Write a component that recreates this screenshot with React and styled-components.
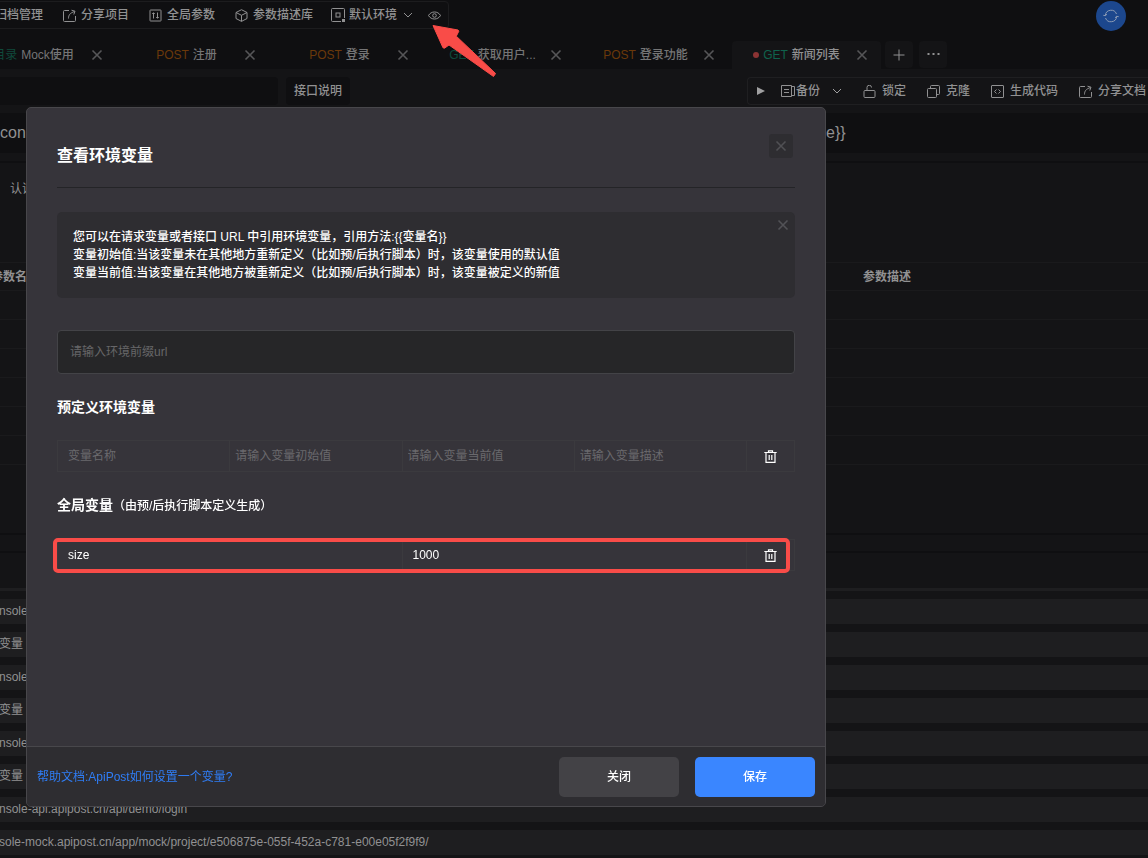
import React, { useState } from "react";
import styled, { createGlobalStyle, css } from "styled-components";

const tabList = [
	{ method: "目录", name: "Mock使用", color: "#0f4a3b" },
	{ method: "POST", name: "注册", color: "#6b390a" },
	{ method: "POST", name: "登录", color: "#6b390a" },
	{ method: "GET", name: "获取用户...", color: "#0f4a3b" },
	{ method: "POST", name: "登录功能", color: "#6b390a" },
	{ method: "GET", name: "新闻列表", color: "#0f634d", active: true },
];

const logList = [
	"nsole-api.apipost.cn/api/demo/login",
	"变量",
	"nsole-api.apipost.cn/api/demo/login",
	"变量",
	"nsole-api.apipost.cn/api/demo/login",
	"变量",
	"nsole-api.apipost.cn/api/demo/login",
	"sole-mock.apipost.cn/app/mock/project/e506875e-055f-452a-c781-e00e05f2f9f9/",
];

const Icon = ({ size = 13, box = 13, children }) => (
	<svg
		width={size}
		height={size}
		viewBox={`0 0 ${box} ${box}`}
		fill="none"
		stroke="currentColor"
		strokeWidth="1"
		aria-hidden="true"
	>
		{children}
	</svg>
);

const ShareIcon = () => (
	<Icon>
		<path d="M6 1.5H1.5A1 1 0 0 0 .5 2.500v9A1 1 0 0 0 1.500 12.500h10A1 1 0 0 0 12.500 11.500V7" />
		<path d="M5.500 9.500C5.500 6 7 4 11.500 2.500M8.500 1.200l3.500 1-1.200 3.300" />
	</Icon>
);
const ParamsIcon = () => (
	<Icon>
		<rect x="1" y="1" width="11" height="11" rx=".5" />
		<path d="M4.5 3.5v6M8.5 3.5v6M3.200 4.500h2.600M7.200 8.500h2.600" />
	</Icon>
);
const CubeIcon = () => (
	<Icon>
		<path d="M6.5.7l5.5 2.8v6L6.5 12.4 1 9.5v-6zM1 3.5l5.5 2.8L12 3.5M6.5 6.3v6" />
	</Icon>
);
const EnvIcon = () => (
	<Icon size={15} box={15}>
		<path d="M10 13.5H1.5A1 1 0 0 1 .5 12.5V1.500A1 1 0 0 1 1.500 .5h11a1 1 0 0 1 1 1V10" />
		<rect x="5" y="5" width="4" height="4" />
		<rect x="11" y="11" width="3" height="3" fill="currentColor" stroke="none" />
	</Icon>
);
const ChevronIcon = () => (
	<Icon size={10} box={10}>
		<path d="M1 3l4 4 4-4" />
	</Icon>
);
const EyeIcon = () => (
	<Icon>
		<path d="M.5 6.500C3 1.800 10 1.800 12.500 6.500 10 11.200 3 11.200.5 6.500z" />
		<circle cx="6.5" cy="6.5" r="1.8" />
	</Icon>
);
const CloseIcon = () => (
	<Icon size={12} box={12}>
		<path d="M1.500 1.500l9 9M10.500 1.500l-9 9" strokeWidth="1.600" />
	</Icon>
);
const PlusIcon = () => (
	<Icon size={12} box={12}>
		<path d="M6 .5v11M.5 6h11" />
	</Icon>
);
const MoreIcon = () => (
	<Icon>
		<path d="M.5 6h2M5.5 6h2M10.5 6h2" strokeWidth="2" />
	</Icon>
);
const PlayIcon = () => (
	<Icon size={8} box={8}>
		<path d="M0 0l8 4-8 4z" fill="currentColor" stroke="none" />
	</Icon>
);
const BackupIcon = () => (
	<Icon size={14} box={14}>
		<path d="M.5 1.5h10v11H.5zM10.5 2.500H13.500v9h-3M3 5.5h5M3 8.5h5" />
	</Icon>
);
const LockIcon = () => (
	<Icon>
		<rect x="1" y="5.5" width="11" height="7" rx="1" />
		<path d="M4 5.5V2.500a2 2 0 0 1 4.500 0" />
	</Icon>
);
const CloneIcon = () => (
	<Icon>
		<rect x=".5" y="3.5" width="9" height="9" rx="1" />
		<path d="M3.5 3.5v-2a1 1 0 0 1 1-1h7a1 1 0 0 1 1 1v7a1 1 0 0 1-1 1h-2" />
	</Icon>
);
const CodeIcon = () => (
	<Icon>
		<rect x=".5" y=".5" width="12" height="12" rx=".5" />
		<path d="M5.500 4.500l-2 2 2 2M7.500 4.500l2 2-2 2" />
	</Icon>
);
const SyncIcon = () => (
	<Icon size={16} box={16}>
		<path d="M2.300 7.500A5.800 5.800 0 0 1 13.500 6M13.700 8.500A5.800 5.800 0 0 1 2.500 10" />
		<path d="M.3 7.300l2 .4 1.700-1.500M15.700 8.700l-2-.4-1.700 1.500" />
	</Icon>
);
const TrashIcon = () => (
	<Icon>
		<path d="M.3 2.5h12.4M4.5 2.2V.9h4v1.3M2 2.5v9.8h9V2.5M5.2 5v5M7.8 5v5" strokeWidth="1.2" />
	</Icon>
);

const App = () => {
	const [prefix, setPrefix] = useState("");
	const [size, setSize] = useState("size");
	const [value, setValue] = useState("1000");

	return (
		<Page>
			<GlobalStyle />
			<TopBar>
				<ProjectTools>
					<ToolButton>归档管理</ToolButton>
					<ToolButton>
						<ShareIcon />
						分享项目
					</ToolButton>
					<ToolButton>
						<ParamsIcon />
						全局参数
					</ToolButton>
					<ToolButton>
						<CubeIcon />
						参数描述库
					</ToolButton>
					<EnvGroup>
						<EnvButton>
							<EnvIcon />
							默认环境
							<ChevronIcon />
						</EnvButton>
						<EyeButton aria-label="查看环境变量">
							<EyeIcon />
							<Arrow width="64" height="54" viewBox="0 0 64 54" aria-hidden="true">
								<path
									d="M1 1.5L26 6l.8 1.2-2.5 5L63.6 49.500 61.500 52.500 17 21l-4.500 3.200-1.500-.4z"
									fill="#f94c48"
									stroke="#f94c48"
									strokeLinejoin="round"
								/>
							</Arrow>
						</EyeButton>
					</EnvGroup>
				</ProjectTools>
				<SyncButton aria-label="同步">
					<SyncIcon />
				</SyncButton>
			</TopBar>

			<TabBar>
				{tabList.map((tab, i) => (
					<Tab key={i} $active={tab.active}>
						<TabLabel>
							{tab.active && <Dot />}
							<Method $color={tab.color}>{tab.method}</Method>
							{tab.name}
						</TabLabel>
						<IconButton aria-label="关闭标签">
							<CloseIcon />
						</IconButton>
					</Tab>
				))}
				<TabAction aria-label="新建">
					<PlusIcon />
				</TabAction>
				<TabAction aria-label="更多">
					<MoreIcon />
				</TabAction>
			</TabBar>

			<Content>
				<NameRow>
					<NameInput aria-label="接口名称" />
					<DescButton>接口说明</DescButton>
					<ApiTools>
						<IconButton aria-label="运行">
							<PlayIcon />
						</IconButton>
						<BackupButton>
							<BackupIcon />
							备份
						</BackupButton>
						<IconButton aria-label="备份选项">
							<ChevronIcon />
						</IconButton>
						<ApiButton>
							<LockIcon />
							锁定
						</ApiButton>
						<ApiButton>
							<CloneIcon />
							克隆
						</ApiButton>
						<ApiButton>
							<CodeIcon />
							生成代码
						</ApiButton>
						<ApiButton>
							<ShareIcon />
							分享文档
						</ApiButton>
					</ApiTools>
				</NameRow>
				<UrlRow>
					<UrlStart>cons</UrlStart>
					<span>e{"}}"}</span>
				</UrlRow>
				<AuthRow>认证</AuthRow>
				<ParamTable>
					<thead>
						<tr>
							<ParamHead $first>参数名</ParamHead>
							<ParamHead>参数描述</ParamHead>
						</tr>
					</thead>
					<tbody>
						{[1, 2, 3, 4, 5, 6].map((n) => (
							<tr key={n}>
								<ParamCell />
								<ParamCell />
							</tr>
						))}
					</tbody>
				</ParamTable>
				<Splitter />
				<ConsoleHead />
				<LogList>
					{logList.map((log, i) => (
						<LogItem key={i}>{log}</LogItem>
					))}
				</LogList>
			</Content>

			<Overlay>
				<Modal role="dialog" aria-labelledby="env-title">
					<ModalBody>
						<ModalHeader>
							<ModalTitle id="env-title">查看环境变量</ModalTitle>
							<ModalClose aria-label="关闭弹窗">
								<CloseIcon />
							</ModalClose>
						</ModalHeader>
						<Notice>
							<div>
								<p>您可以在请求变量或者接口 URL 中引用环境变量，引用方法:{"{{变量名}}"}</p>
								<p>变量初始值:当该变量未在其他地方重新定义（比如预/后执行脚本）时，该变量使用的默认值</p>
								<p>变量当前值:当该变量在其他地方被重新定义（比如预/后执行脚本）时，该变量被定义的新值</p>
							</div>
							<NoticeClose aria-label="关闭提示">
								<CloseIcon />
							</NoticeClose>
						</Notice>
						<UrlInput
							aria-label="环境前缀url"
							placeholder="请输入环境前缀url"
							value={prefix}
							onChange={(e) => setPrefix(e.target.value)}
						/>
						<SectionTitle>预定义环境变量</SectionTitle>
						<VarTable>
							<tbody>
								<tr>
									<VarCell>
										<CellInput $wide aria-label="变量名称" placeholder="变量名称" />
									</VarCell>
									<VarCell>
										<CellInput aria-label="变量初始值" placeholder="请输入变量初始值" />
									</VarCell>
									<VarCell>
										<CellInput aria-label="变量当前值" placeholder="请输入变量当前值" />
									</VarCell>
									<VarCell>
										<CellInput aria-label="变量描述" placeholder="请输入变量描述" />
									</VarCell>
									<VarCell $action>
										<DeleteButton aria-label="删除">
											<TrashIcon />
										</DeleteButton>
									</VarCell>
								</tr>
							</tbody>
						</VarTable>
						<SectionTitle>
							全局变量<small>（由预/后执行脚本定义生成）</small>
						</SectionTitle>
						<Marked>
							<VarTable>
								<tbody>
									<tr>
										<VarCell>
											<CellInput
												$wide
												aria-label="全局变量名称"
												value={size}
												onChange={(e) => setSize(e.target.value)}
											/>
										</VarCell>
										<VarCell>
											<CellInput
												$wide
												aria-label="全局变量值"
												value={value}
												onChange={(e) => setValue(e.target.value)}
											/>
										</VarCell>
										<VarCell $action>
											<DeleteButton aria-label="删除">
												<TrashIcon />
											</DeleteButton>
										</VarCell>
									</tr>
								</tbody>
							</VarTable>
						</Marked>
					</ModalBody>
					<ModalFooter>
						<HelpLink href="#help">帮助文档:ApiPost如何设置一个变量?</HelpLink>
						<FooterButton>关闭</FooterButton>
						<FooterButton $primary>保存</FooterButton>
					</ModalFooter>
				</Modal>
			</Overlay>
		</Page>
	);
};

const GlobalStyle = createGlobalStyle`
	* {
		box-sizing: border-box;
	}
	body {
		margin: 0;
		background: #141416;
		color: #919192;
		font: 12px/18px "Liberation Sans", "Noto Sans CJK SC", sans-serif;
	}
	button, input {
		font: inherit;
		color: inherit;
		border: 0;
		padding: 0;
		background: none;
		outline: none;
	}
	button {
		display: inline-flex;
		align-items: center;
		flex-shrink: 0;
		white-space: nowrap;
		cursor: pointer;
	}
	svg {
		flex-shrink: 0;
	}
	h2, h3, p {
		margin: 0;
	}
`;

const Page = styled.div`
	height: 100vh;
	overflow: hidden;
	background: #0f0f11;
`;

const TopBar = styled.div`
	display: flex;
	justify-content: space-between;
	height: 41px;
	padding: 1px 22px 0 0;
`;
/* the left end of the bar runs out of the window */
const ProjectTools = styled.div`
	display: flex;
	align-items: center;
	gap: 20px;
	height: 28px;
	margin-left: -6px;
	padding-right: 7px;
	border: 1px solid #1c1c1e;
	border-radius: 4px;
	font-weight: 500;
`;
const ToolButton = styled.button`
	gap: 5px;
`;
const EnvGroup = styled.div`
	display: flex;
	align-items: center;
	gap: 15px;
	margin-left: -2px;
`;
const EnvButton = styled.button`
	gap: 3px;
	> svg:last-child {
		margin-left: 3px;
	}
`;
const EyeButton = styled.button`
	position: relative;
`;
const Arrow = styled.svg`
	position: absolute;
	top: 15px;
	left: 4px;
	z-index: 1;
`;
const SyncButton = styled.button`
	justify-content: center;
	width: 30px;
	height: 30px;
	border-radius: 50%;
	background: #1c478d;
	color: #8b9bb5;
`;

const TabBar = styled.div`
	display: flex;
	gap: 4px;
	height: 28px;
	margin-left: -33px;
`;
const Tab = styled.div`
	display: flex;
	align-items: center;
	flex: 0 0 149px;
	padding: 0 13px 0 9px;
	border-radius: 4px 4px 0 0;
	color: #757576;
	font-weight: 500;
	${(props) =>
		props.$active &&
		css`
			padding-left: 5px;
			background: #141416;
			color: #919192;
		`}
`;
const TabLabel = styled.div`
	display: flex;
	align-items: center;
	justify-content: center;
	flex: 1;
	gap: 4px;
	white-space: nowrap;
`;
const Method = styled.span`
	color: ${(props) => props.$color};
	font-weight: 400;
`;
const Dot = styled.span`
	width: 6px;
	height: 6px;
	border-radius: 50%;
	background: #8c3434;
`;
const IconButton = styled.button`
	color: #565658;
`;
const TabAction = styled.button`
	justify-content: center;
	width: 28px;
	height: 27px;
	border-radius: 4px;
	background: #141416;
	color: #919192;
	& + & {
		margin-left: 2px;
	}
`;

const Content = styled.div`
	background: #141416;
`;
const NameRow = styled.div`
	display: flex;
	gap: 8px;
	padding: 8px 0;
`;
const NameInput = styled.input`
	flex: 0 0 278px;
	height: 28px;
	border-radius: 0 4px 4px 0;
	background: #0f0f11;
`;
const DescButton = styled.button`
	padding: 0 8px;
	border-radius: 4px;
	background: #0f0f11;
	font-weight: 500;
`;
const ApiTools = styled.div`
	display: flex;
	align-items: center;
	flex-shrink: 0;
	height: 28px;
	margin-left: auto;
	padding: 0 2px 0 9px;
	border: 1px solid #1f1f21;
	border-right: 0;
	border-radius: 4px 0 0 4px;
	font-weight: 500;
	${IconButton} {
		color: #a0a0a1;
	}
`;
const BackupButton = styled.button`
	gap: 1px;
	margin: 0 12px 0 16px;
`;
const ApiButton = styled.button`
	gap: 6px;
	margin-left: 21px;
`;
const UrlRow = styled.div`
	display: flex;
	align-items: center;
	height: 40px;
	background: #0f0f11;
	font-size: 16px;
`;
const UrlStart = styled.span`
	flex: 0 0 826px;
`;
const AuthRow = styled.div`
	height: 101px;
	margin-top: 8px;
	padding: 17px 10px;
	border-top: 2px solid #0f0f11;
`;
const ParamTable = styled.table`
	width: 100%;
	border-collapse: collapse;
	table-layout: fixed;
`;
const ParamHead = styled.th`
	width: ${(props) => (props.$first ? "863px" : "auto")};
	height: 28px;
	padding: 0;
	border-top: 1px solid #1a1a1c;
	border-bottom: 1px solid #1a1a1c;
	text-align: left;
	text-indent: ${(props) => (props.$first ? "-9px" : "0")};
`;
const ParamCell = styled.td`
	height: 29px;
	padding: 0;
	border-bottom: 1px solid #1a1a1c;
`;
const Splitter = styled.div`
	height: 20px;
	margin-top: 68px;
	border: solid #0f0f11;
	border-width: 2px 0;
`;
const ConsoleHead = styled.div`
	height: 38px;
	border-bottom: 3px solid #1e1e20;
`;
const LogList = styled.div`
	display: flex;
	flex-direction: column;
	gap: 8px;
	padding: 8px 0;
`;
const LogItem = styled.div`
	height: 25px;
	line-height: 25px;
	text-indent: -1px;
	background: #1e1e20;
	white-space: nowrap;
`;

const Overlay = styled.div`
	position: fixed;
	inset: 0;
	display: flex;
	align-items: flex-start;
	padding: 107px 26px 0;
	pointer-events: none;
`;
const Modal = styled.div`
	display: flex;
	flex-direction: column;
	width: 100%;
	max-width: 800px;
	min-height: 700px;
	overflow: hidden;
	border: 1px solid #48474b;
	border-radius: 5px;
	background: #36343a;
	color: #fff;
	pointer-events: auto;
`;
const ModalBody = styled.div`
	flex: 1;
	padding: 26px 30px;
`;
const ModalHeader = styled.div`
	display: flex;
	align-items: flex-start;
	justify-content: space-between;
	margin-bottom: 24px;
	padding-bottom: 19px;
	border-bottom: 1px solid #242427;
`;
const ModalTitle = styled.h2`
	margin-top: 10px;
	font-size: 16px;
	line-height: 24px;
`;
const ModalClose = styled.button`
	justify-content: center;
	width: 24px;
	height: 24px;
	margin-right: 2px;
	border-radius: 3px;
	background: #2e2d31;
	color: #505054;
`;
const Notice = styled.div`
	display: flex;
	align-items: flex-start;
	justify-content: space-between;
	margin-bottom: 32px;
	padding: 16px;
	border-radius: 5px;
	background: #2e2d31;
	font-weight: 500;
`;
const NoticeClose = styled.button`
	margin: -9px -10px 0 0;
	color: #525256;
`;
const UrlInput = styled.input`
	display: block;
	width: 100%;
	height: 44px;
	padding: 0 12px;
	border: 1px solid #434347;
	border-radius: 4px;
	background: #262628;
	&::placeholder {
		color: #666668;
	}
`;
const SectionTitle = styled.h3`
	margin: 23px 0;
	font-size: 14px;
	line-height: 20px;
	> small {
		font-size: 12px;
		font-weight: 500;
	}
`;
const Marked = styled.div`
	position: relative;
	&::after {
		content: "";
		position: absolute;
		inset: -1px 5px -2px -4px;
		border: 4px solid #f94c48;
		border-radius: 5px;
		pointer-events: none;
	}
`;
const VarTable = styled.table`
	width: 100%;
	table-layout: fixed;
	border-spacing: 0;
	border: solid #3b3a3e;
	border-width: 1px 0 0 1px;
`;
const VarCell = styled.td`
	width: ${(props) => (props.$action ? "48px" : "auto")};
	height: 31px;
	padding: 0;
	border: solid #3b3a3e;
	border-width: 0 1px 1px 0;
`;
const CellInput = styled.input`
	display: block;
	width: 100%;
	height: 30px;
	padding: 0 ${(props) => (props.$wide ? "10px" : "5px")};
	font-weight: 500;
	&::placeholder {
		color: #6a696d;
		font-weight: 400;
	}
`;
const DeleteButton = styled.button`
	display: block;
	height: 16px;
	margin: 0 auto;
	> svg {
		display: block;
	}
`;
const ModalFooter = styled.div`
	display: flex;
	align-items: center;
	gap: 16px;
	height: 60px;
	padding: 0 10px;
	border-top: 1px solid #48474b;
	background: #2e2d31;
`;
const HelpLink = styled.a`
	margin-right: auto;
	color: #2f7df6;
	text-decoration: none;
`;
const FooterButton = styled.button`
	justify-content: center;
	width: 120px;
	height: 40px;
	border-radius: 5px;
	background: ${(props) => (props.$primary ? "#3a86ff" : "#434246")};
	font-weight: 500;
`;

export default App;
